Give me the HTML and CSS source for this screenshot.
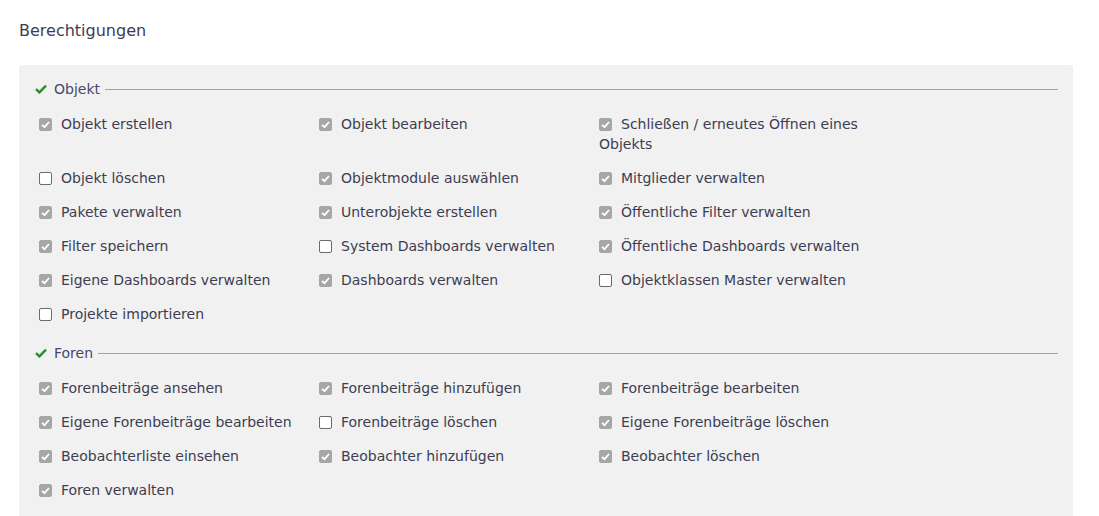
FILE: index.html
```html
<!DOCTYPE html>
<html lang="de">
<head>
<meta charset="utf-8">
<title>Berechtigungen</title>
<link rel="stylesheet" href="styles.css">
</head>
<body>
<div class="page">
  <h2 class="title">Berechtigungen</h2>
  <div class="panel">
    <div class="legend">
      <svg class="ok" viewBox="0 0 12 10" width="12" height="10"><path d="M1 5.2 L4.4 8.4 L11 1.6" fill="none" stroke="#2f8a2f" stroke-width="2.4"/></svg>
      <span class="legend-text">Objekt</span>
      <span class="legend-line"></span>
    </div>
    <div class="grid">
      <label class="item"><span class="cb on"><svg viewBox="0 0 13 13"><path d="M3 6.8 L5.5 9.2 L10 4" fill="none" stroke="#fff" stroke-width="1.8"/></svg></span>Objekt erstellen</label>
      <label class="item"><span class="cb on"><svg viewBox="0 0 13 13"><path d="M3 6.8 L5.5 9.2 L10 4" fill="none" stroke="#fff" stroke-width="1.8"/></svg></span>Objekt bearbeiten</label>
      <label class="item"><span class="cb on"><svg viewBox="0 0 13 13"><path d="M3 6.8 L5.5 9.2 L10 4" fill="none" stroke="#fff" stroke-width="1.8"/></svg></span>Schließen / erneutes Öffnen eines Objekts</label>
      <label class="item"><span class="cb"></span>Objekt löschen</label>
      <label class="item"><span class="cb on"><svg viewBox="0 0 13 13"><path d="M3 6.8 L5.5 9.2 L10 4" fill="none" stroke="#fff" stroke-width="1.8"/></svg></span>Objektmodule auswählen</label>
      <label class="item"><span class="cb on"><svg viewBox="0 0 13 13"><path d="M3 6.8 L5.5 9.2 L10 4" fill="none" stroke="#fff" stroke-width="1.8"/></svg></span>Mitglieder verwalten</label>
      <label class="item"><span class="cb on"><svg viewBox="0 0 13 13"><path d="M3 6.8 L5.5 9.2 L10 4" fill="none" stroke="#fff" stroke-width="1.8"/></svg></span>Pakete verwalten</label>
      <label class="item"><span class="cb on"><svg viewBox="0 0 13 13"><path d="M3 6.8 L5.5 9.2 L10 4" fill="none" stroke="#fff" stroke-width="1.8"/></svg></span>Unterobjekte erstellen</label>
      <label class="item"><span class="cb on"><svg viewBox="0 0 13 13"><path d="M3 6.8 L5.5 9.2 L10 4" fill="none" stroke="#fff" stroke-width="1.8"/></svg></span>Öffentliche Filter verwalten</label>
      <label class="item"><span class="cb on"><svg viewBox="0 0 13 13"><path d="M3 6.8 L5.5 9.2 L10 4" fill="none" stroke="#fff" stroke-width="1.8"/></svg></span>Filter speichern</label>
      <label class="item"><span class="cb"></span>System Dashboards verwalten</label>
      <label class="item"><span class="cb on"><svg viewBox="0 0 13 13"><path d="M3 6.8 L5.5 9.2 L10 4" fill="none" stroke="#fff" stroke-width="1.8"/></svg></span>Öffentliche Dashboards verwalten</label>
      <label class="item"><span class="cb on"><svg viewBox="0 0 13 13"><path d="M3 6.8 L5.5 9.2 L10 4" fill="none" stroke="#fff" stroke-width="1.8"/></svg></span>Eigene Dashboards verwalten</label>
      <label class="item"><span class="cb on"><svg viewBox="0 0 13 13"><path d="M3 6.8 L5.5 9.2 L10 4" fill="none" stroke="#fff" stroke-width="1.8"/></svg></span>Dashboards verwalten</label>
      <label class="item"><span class="cb"></span>Objektklassen Master verwalten</label>
      <label class="item"><span class="cb"></span>Projekte importieren</label>
    </div>
    <div class="legend second">
      <svg class="ok" viewBox="0 0 12 10" width="12" height="10"><path d="M1 5.2 L4.4 8.4 L11 1.6" fill="none" stroke="#2f8a2f" stroke-width="2.4"/></svg>
      <span class="legend-text">Foren</span>
      <span class="legend-line"></span>
    </div>
    <div class="grid">
      <label class="item"><span class="cb on"><svg viewBox="0 0 13 13"><path d="M3 6.8 L5.5 9.2 L10 4" fill="none" stroke="#fff" stroke-width="1.8"/></svg></span>Forenbeiträge ansehen</label>
      <label class="item"><span class="cb on"><svg viewBox="0 0 13 13"><path d="M3 6.8 L5.5 9.2 L10 4" fill="none" stroke="#fff" stroke-width="1.8"/></svg></span>Forenbeiträge hinzufügen</label>
      <label class="item"><span class="cb on"><svg viewBox="0 0 13 13"><path d="M3 6.8 L5.5 9.2 L10 4" fill="none" stroke="#fff" stroke-width="1.8"/></svg></span>Forenbeiträge bearbeiten</label>
      <label class="item"><span class="cb on"><svg viewBox="0 0 13 13"><path d="M3 6.8 L5.5 9.2 L10 4" fill="none" stroke="#fff" stroke-width="1.8"/></svg></span>Eigene Forenbeiträge bearbeiten</label>
      <label class="item"><span class="cb"></span>Forenbeiträge löschen</label>
      <label class="item"><span class="cb on"><svg viewBox="0 0 13 13"><path d="M3 6.8 L5.5 9.2 L10 4" fill="none" stroke="#fff" stroke-width="1.8"/></svg></span>Eigene Forenbeiträge löschen</label>
      <label class="item"><span class="cb on"><svg viewBox="0 0 13 13"><path d="M3 6.8 L5.5 9.2 L10 4" fill="none" stroke="#fff" stroke-width="1.8"/></svg></span>Beobachterliste einsehen</label>
      <label class="item"><span class="cb on"><svg viewBox="0 0 13 13"><path d="M3 6.8 L5.5 9.2 L10 4" fill="none" stroke="#fff" stroke-width="1.8"/></svg></span>Beobachter hinzufügen</label>
      <label class="item"><span class="cb on"><svg viewBox="0 0 13 13"><path d="M3 6.8 L5.5 9.2 L10 4" fill="none" stroke="#fff" stroke-width="1.8"/></svg></span>Beobachter löschen</label>
      <label class="item"><span class="cb on"><svg viewBox="0 0 13 13"><path d="M3 6.8 L5.5 9.2 L10 4" fill="none" stroke="#fff" stroke-width="1.8"/></svg></span>Foren verwalten</label>
    </div>
  </div>
</div>
</body>
</html>
```
FILE: styles.css
```css
html, body {
  margin: 0;
  padding: 0;
  background: #ffffff;
}
body {
  font-family: "DejaVu Sans", "Liberation Sans", sans-serif;
  font-size: 14px;
  color: #3d3d52;
}
.page {
  padding: 20px 26px 0 19px;
}
.title {
  margin: 0;
  font-size: 16px;
  font-weight: normal;
  line-height: 22px;
  color: #3d3d52;
}
.panel {
  margin-top: 23px;
  background: #f1f1f1;
  border-radius: 3px 3px 0 0;
  padding: 14px 15px 30px 16px;
}
.legend {
  display: flex;
  align-items: center;
  height: 20px;
  line-height: 20px;
}
.legend.second {
  margin-top: 19px;
}
.ok {
  display: block;
  flex: none;
  margin-right: 7px;
}
.legend-text {
  color: #47476e;
  font-size: 14px;
}
.legend-line {
  flex: 1;
  height: 1px;
  background: #a3a3a3;
  margin-left: 5px;
}
.grid {
  display: grid;
  grid-template-columns: 280px 280px 280px;
  row-gap: 14px;
  padding-left: 4px;
  margin-top: 15px;
}
.item {
  display: block;
  line-height: 20px;
  color: #3d3d52;
}
.cb {
  display: inline-block;
  box-sizing: border-box;
  width: 13px;
  height: 13px;
  border: 1px solid #6b6b6b;
  border-radius: 2px;
  background: #ffffff;
  vertical-align: -2px;
  margin-right: 9px;
}
.cb.on {
  border-color: #a6a6a6;
  background: #a6a6a6;
}
.cb svg {
  display: block;
  width: 13px;
  height: 13px;
  margin: -1px;
}
```
